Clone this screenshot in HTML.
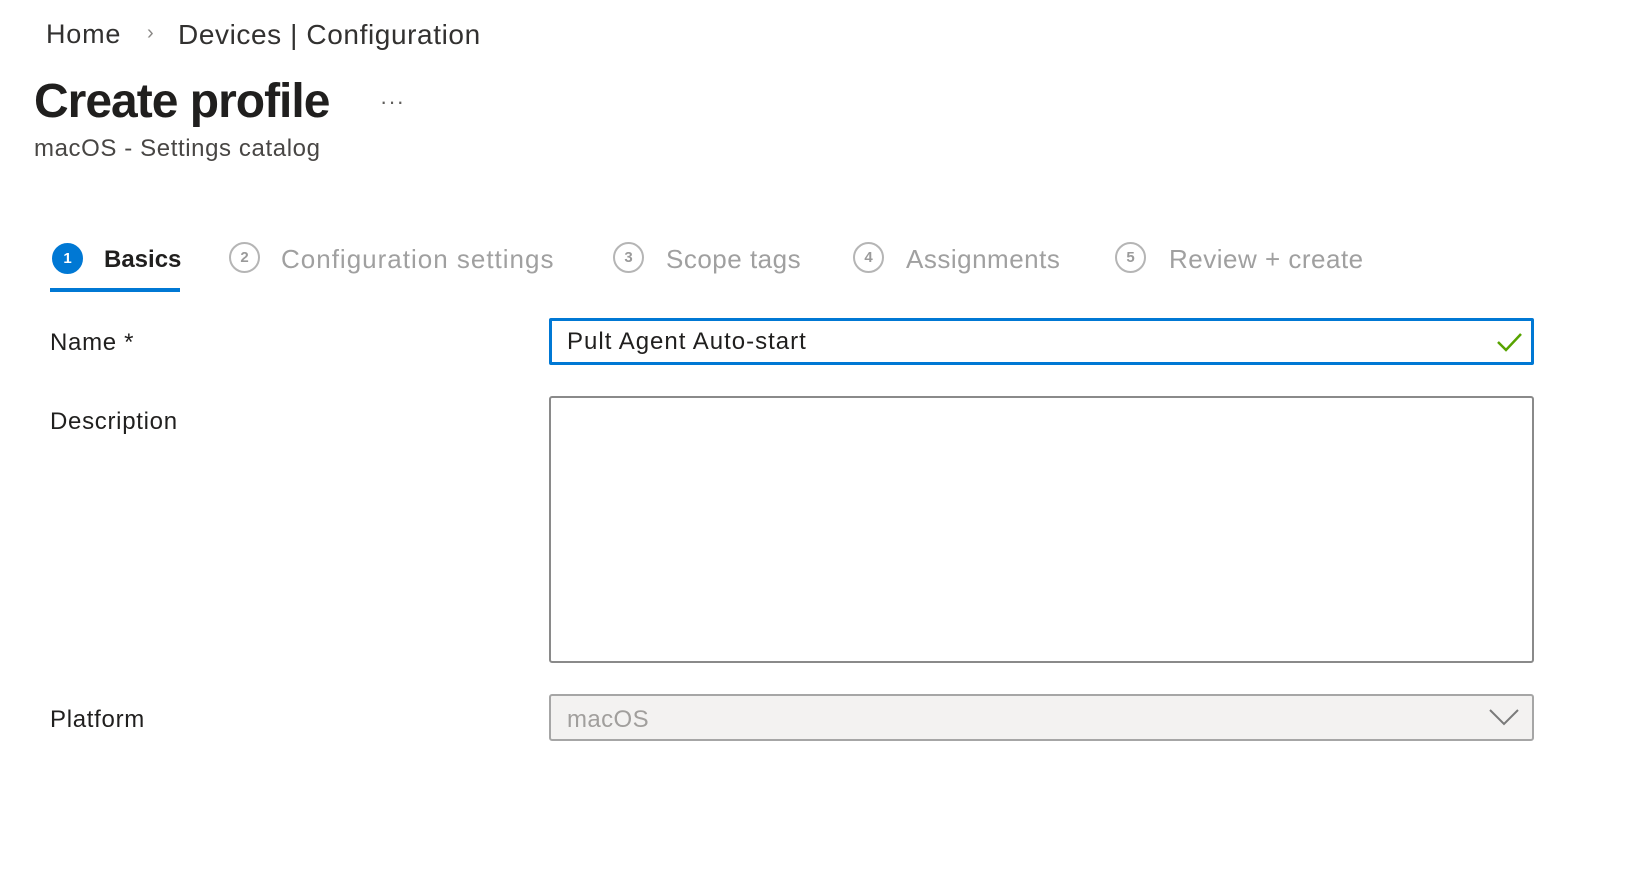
<!DOCTYPE html>
<html><head><meta charset="utf-8"><style>
body{margin:0;width:1646px;height:876px;background:#fff;font-family:"Liberation Sans",sans-serif;color:#323130;position:relative;overflow:hidden}
.a{position:absolute;white-space:nowrap}
.circ{position:absolute;width:31px;height:31px;border-radius:50%;border:2px solid #b5b5b5;box-sizing:border-box;color:#9a9a9a;font-size:15px;font-weight:bold;text-align:center;line-height:27px}
.tab{position:absolute;top:244px;font-size:26px;color:#a0a0a0;white-space:nowrap;letter-spacing:0.5px}
.lbl{position:absolute;left:50px;font-size:24px;color:#201f1e;letter-spacing:0.7px}
</style></head><body>
<div class="a" style="left:46px;top:19px;font-size:27px;color:#323130;letter-spacing:0.8px">Home</div>
<div class="a" style="left:147px;top:22px;font-size:20px;color:#8a8886">›</div>
<div class="a" style="left:178px;top:19px;font-size:28px;color:#323130;letter-spacing:0.6px">Devices | Configuration</div>
<div class="a" style="left:34px;top:74px;font-size:48px;font-weight:bold;color:#201f1e;letter-spacing:-1px">Create profile</div>
<div class="a" style="left:380px;top:89px;font-size:22px;color:#605e5c;letter-spacing:1px">···</div>
<div class="a" style="left:34px;top:135px;font-size:24px;color:#484644;letter-spacing:0.6px">macOS - Settings catalog</div>

<div class="circ" style="left:52px;top:243px;background:#0078d4;border-color:#0078d4;color:#fff">1</div>
<div class="tab" style="left:104px;color:#201f1e;font-weight:bold;font-size:24px;top:246px;letter-spacing:0">Basics</div>
<div class="a" style="left:50px;top:288px;width:130px;height:4px;background:#0078d4"></div>
<div class="circ" style="left:229px;top:242px">2</div>
<div class="tab" style="left:281px;letter-spacing:1px">Configuration settings</div>
<div class="circ" style="left:613px;top:242px">3</div>
<div class="tab" style="left:666px">Scope tags</div>
<div class="circ" style="left:853px;top:242px">4</div>
<div class="tab" style="left:906px">Assignments</div>
<div class="circ" style="left:1115px;top:242px">5</div>
<div class="tab" style="left:1169px">Review + create</div>

<div class="lbl" style="top:329px">Name *</div>
<div class="a" style="left:549px;top:318px;width:985px;height:47px;border:3px solid #0078d4;border-radius:2px;box-sizing:border-box"></div>
<div class="a" style="left:567px;top:328px;font-size:24px;color:#201f1e;letter-spacing:1px">Pult Agent Auto-start</div>
<svg class="a" style="left:1496px;top:330px" width="28" height="24" viewBox="0 0 28 24"><path d="M2 12 L10 20 L25 4" fill="none" stroke="#57a300" stroke-width="2.5"/></svg>

<div class="lbl" style="top:408px">Description</div>
<div class="a" style="left:549px;top:396px;width:985px;height:267px;border:2px solid #8a8a8a;border-radius:3px;box-sizing:border-box"></div>

<div class="lbl" style="top:706px">Platform</div>
<div class="a" style="left:549px;top:694px;width:985px;height:47px;border:2px solid #a6a6a6;border-radius:3px;background:#f3f2f1;box-sizing:border-box"></div>
<div class="a" style="left:567px;top:706px;font-size:24px;color:#a19f9d;letter-spacing:0.4px">macOS</div>
<svg class="a" style="left:1488px;top:707px" width="32" height="20" viewBox="0 0 32 20"><path d="M2 3 L16 17 L30 3" fill="none" stroke="#7a7a7a" stroke-width="2"/></svg>
</body></html>
